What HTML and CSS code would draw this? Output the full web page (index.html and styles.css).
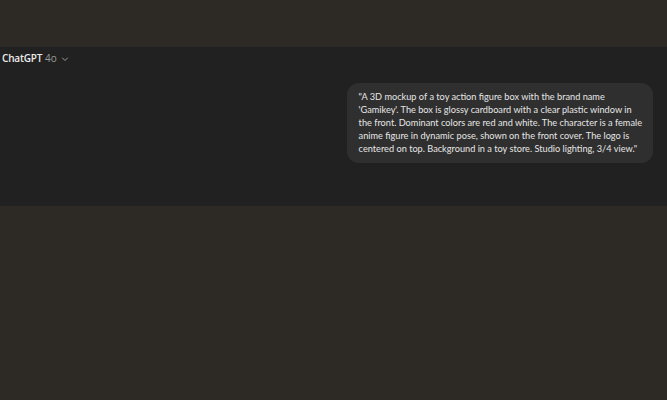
FILE: index.html
```html
<!DOCTYPE html>
<html lang="en">
<head>
    <meta charset="UTF-8">
    <meta name="viewport" content="width=device-width, initial-scale=1.0">
    <title>ChatGPT</title>
    <link rel="stylesheet" href="styles.css">
</head>
<body>
    <div class="top-strip"></div>
    <div class="chat">
        <!-- Model picker -->
        <div class="model-bar">
            <span class="model-name">ChatGPT</span>
            <span class="model-version">4o</span>
            <svg class="chevron" width="8" height="8" viewBox="0 0 8 8">
                <path d="M1.5 3 L4 5.5 L6.5 3" fill="none" stroke="#9a9a9a" stroke-width="1" stroke-linecap="round" stroke-linejoin="round"/>
            </svg>
        </div>

        <!-- User message -->
        <div class="message-row">
            <div class="bubble">"A 3D mockup of a toy action figure box with the brand name<br>
                'Gamikey'. The box is glossy cardboard with a clear plastic window in<br>
                the front. Dominant colors are red and white. The character is a female<br>
                anime figure in dynamic pose, shown on the front cover. The logo is<br>
                centered on top. Background in a toy store. Studio lighting, 3/4 view."</div>
        </div>
    </div>
    <div class="bottom-strip"></div>
</body>
</html>
```

FILE: styles.css
```css
body {
    font-family: "Open Sans", "Noto Sans", Arial, sans-serif;
    margin: 0;
    padding: 0;
    background-color: #2d2a25;
    height: 400px;
    overflow: hidden;
}
.top-strip {
    height: 47px;
}
.chat {
    background-color: #212121;
    height: 159px;
}
.model-bar {
    display: flex;
    align-items: center;
    height: 22px;
    padding-left: 2px;
    gap: 3px;
}
.model-name {
    color: #ececec;
    font-size: 10px;
    font-weight: 600;
    letter-spacing: -0.2px;
}
.model-version {
    color: #9b9b9b;
    font-size: 10px;
}
.chevron {
    margin-left: 1px;
    margin-top: 1px;
}
.message-row {
    display: flex;
    justify-content: flex-end;
    padding-right: 14px;
    margin-top: 14px;
}
.bubble {
    background-color: #2f2f2f;
    color: #e6e6e6;
    font-family: Lato, "Open Sans", sans-serif;
    font-size: 9.2px;
    line-height: 13px;
    white-space: nowrap;
    padding: 7px 11px 8px 12px;
    border-radius: 12px;
}
```
